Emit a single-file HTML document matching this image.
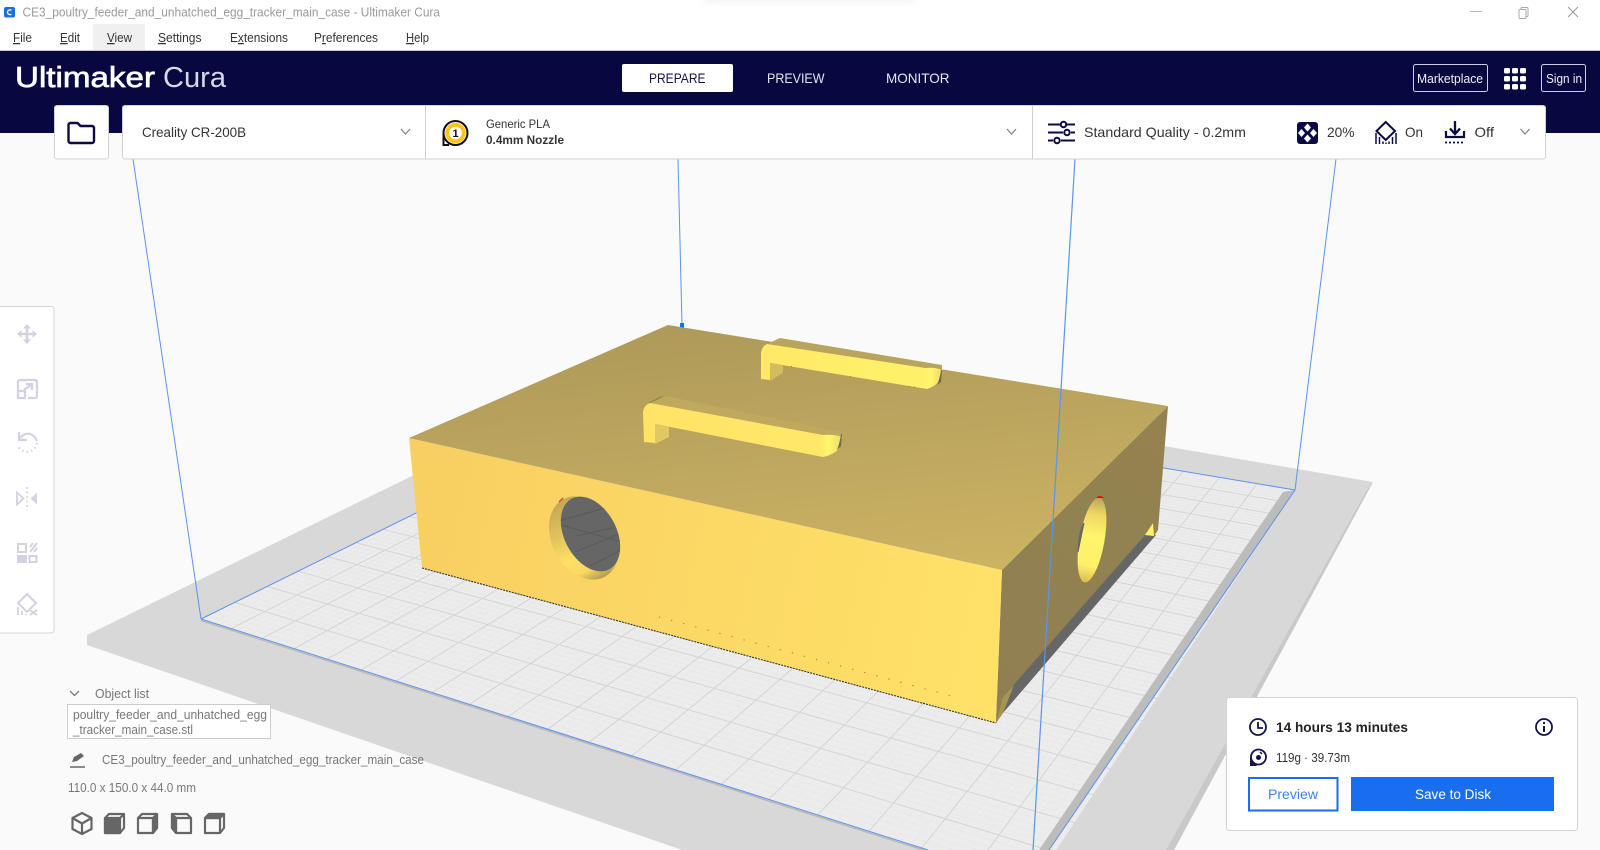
<!DOCTYPE html>
<html lang="en"><head><meta charset="utf-8"><title>Ultimaker Cura</title>
<style>
html,body{margin:0;padding:0;background:#fafafa;width:1600px;height:850px;overflow:hidden}
svg{display:block;position:absolute;left:0;top:0;filter:blur(.35px)}
text{font-family:"Liberation Sans",sans-serif;white-space:pre}
</style></head><body>
<svg xmlns="http://www.w3.org/2000/svg" width="1600" height="850" viewBox="0 0 1600 850">
<defs>
<linearGradient id="top" gradientUnits="userSpaceOnUse" x1="700" y1="325" x2="725" y2="590"><stop offset="0" stop-color="#ae9a5a"/><stop offset="1" stop-color="#ccb263"/></linearGradient>
<linearGradient id="front" gradientUnits="userSpaceOnUse" x1="409" y1="500" x2="1000" y2="620"><stop offset="0" stop-color="#f8cf62"/><stop offset="1" stop-color="#ffe168"/></linearGradient>
<linearGradient id="right" gradientUnits="userSpaceOnUse" x1="1160" y1="410" x2="1000" y2="700"><stop offset="0" stop-color="#948350"/><stop offset="1" stop-color="#8f7f52"/></linearGradient>
<linearGradient id="rim" gradientUnits="userSpaceOnUse" x1="0" y1="496" x2="0" y2="581"><stop offset="0" stop-color="#c4a858"/><stop offset=".35" stop-color="#e2c45e"/><stop offset=".65" stop-color="#ffe064"/><stop offset=".85" stop-color="#f8d862"/><stop offset="1" stop-color="#b89f52"/></linearGradient>
<linearGradient id="hole2" x1="0" y1="0" x2="0" y2="1"><stop offset="0" stop-color="#b8a45c"/><stop offset=".2" stop-color="#efd764"/><stop offset=".45" stop-color="#fff46c"/><stop offset=".8" stop-color="#fff06a"/><stop offset="1" stop-color="#d8bc54"/></linearGradient>
<linearGradient id="hend" x1="0" y1="0" x2="1" y2="0"><stop offset="0" stop-color="#ffe366"/><stop offset=".7" stop-color="#ffe768"/><stop offset=".89" stop-color="#ffe868"/><stop offset=".93" stop-color="#fff66e"/><stop offset="1" stop-color="#f0dc64"/></linearGradient>
<linearGradient id="hend2" x1="0" y1="0" x2="1" y2="0"><stop offset="0" stop-color="#ffe868"/><stop offset=".7" stop-color="#fff06a"/><stop offset=".89" stop-color="#fff06a"/><stop offset=".93" stop-color="#fff66e"/><stop offset="1" stop-color="#f0dc64"/></linearGradient>
<filter id="sh" x="-20%" y="-400%" width="140%" height="900%"><feGaussianBlur stdDeviation="4"/></filter>
<clipPath id="hc"><ellipse cx="590.500" cy="534" rx="26" ry="40" transform="rotate(-28 590.500 534)"/></clipPath>
</defs>

<!-- scene -->
<rect width="1600" height="850" fill="#fafafa"/>
<polygon points="87,635 87,645 682,850 1174,850 1373,482 653,358" fill="#d8d8d8"/>
<polygon points="1373,482 1174,850 1166,850 1367,490" fill="#c9c9c9"/>
<polygon points="201,619 674,386 1295,490 1034,883.500" fill="#ececec"/>
<g id="grid2" stroke="#e5e5e5" stroke-width=".5" fill="none"></g>
<g id="grid" stroke="#d4d4d4" stroke-width="1" fill="none"></g>
<polygon points="1295,490 1049,850 1039,850 1283,492" fill="#bcbcbc"/>
<path d="M201,620.500 L928,851.500" stroke="#b8b8b8" stroke-width="1.500" fill="none"/>
<g stroke="#5b93ee" stroke-width="1" fill="none">
<path d="M201,619 L674,386"/>
<path d="M674,386 L1295,490"/>
<path d="M201,619 L928,850"/>
<path d="M1295,490 L1049,850"/>
<path d="M133,159 L201,619"/>
<path d="M1336,159 L1295,490"/>
<path d="M678,159 L682,325"/>
</g>
<rect x="680" y="323" width="4" height="5" fill="#1a6fe8"/>

<!-- object -->
<polygon points="1145,533 1156,535 1003,713 996,723 996,700" fill="#666"/>
<polygon points="1002,570 1168,406 1158,530 1154,536 1145,535 1003,697 996,723" fill="url(#right)"/>
<polygon points="1003,697 1014,685 1003,713 996,723" fill="#a8944e"/>
<polygon points="1145,535 1153,523 1154,536" fill="#fff06a"/>
<polygon points="409,438 1002,570 996,723 422,568" fill="url(#front)"/>
<polygon points="668,325 1168,406 1002,570 409,438" fill="url(#top)"/>
<path d="M422,568 L996,723" stroke="#333" stroke-width="1.100" stroke-dasharray="2 1" fill="none"/>
<path d="M659,617 L959,698" stroke="#f0502c" stroke-width="1" stroke-dasharray="1.200 11.300" fill="none"/>
<!-- front hole -->
<ellipse cx="584" cy="538" rx="32" ry="44" transform="rotate(-28 584 538)" fill="url(#rim)"/>
<ellipse cx="590.500" cy="534" rx="26" ry="40" transform="rotate(-28 590.500 534)" fill="#666"/>
<g stroke="#595959" stroke-width="1" fill="none" clip-path="url(#hc)"><path d="M555,522 L612,506"/><path d="M558,524 L625,543"/><path d="M575,552 L622,533"/><path d="M576,536 L612,528"/><path d="M590,566 L625,548"/></g>
<path d="M559,502 L563,498" stroke="#e04030" stroke-width="1.300" fill="none"/>
<!-- right hole -->
<ellipse cx="1092" cy="540" rx="12.500" ry="43" transform="rotate(10 1092 540)" fill="url(#hole2)"/>
<path d="M1084,523 L1078,552 Q1079,530 1084,523Z" fill="#666" stroke="#666"/>
<path d="M1096,498 Q1100,494 1104,498 Z" fill="#f00"/>
<!-- handles -->
<polygon points="767,344 780,338 942,365 942,370 925,368" fill="#b8a45c"/>
<path d="M761,353 Q762,346 767,344 L925,368 Q936,367 942,370 L940,380 Q936,386 927,389 L770,363 L770,380 L761,379 Z" fill="url(#hend2)"/>
<polygon points="770,363 783,365 783,373 770,381" fill="#d4bb5e"/>
<path d="M942,370 L941,382 L937,385 Q940,378 941,370Z" fill="#6f6a50"/>
<polygon points="650,403 665,396 842,432 842,437 823,435" fill="#bfa95e"/>
<path d="M650,403 L665,396 L660,397 L648,403Z" fill="#8d7f52"/>
<path d="M643,412 Q644,405 650,403 L823,435 Q835,434 842,437 L840,447 Q836,454 823,457 L655,424 L655,443 L644,442 Z" fill="url(#hend)"/>
<polygon points="655,424 669,427 669,437 655,444" fill="#e2c860"/>
<path d="M842,434 L841,446 L837,450 Q840,442 841,434Z" fill="#6f6a50"/>
<g fill="#f0502c"><rect x="791" y="366" width="1" height="1"/><rect x="850" y="376" width="1" height="1"/><rect x="909" y="386" width="1" height="1"/><rect x="914" y="386.500" width="1" height="1"/></g>
<path d="M1075,159 L1033,850" stroke="#5b93ee" stroke-width="1.200" fill="none"/>

<!-- title bar -->
<rect width="1600" height="51" fill="#fff"/>
<rect x="705" y="-8" width="210" height="9" fill="#ccc" opacity=".3" filter="url(#sh)"/>
<rect x="4" y="7" width="11" height="10.500" rx="2" fill="#1a6fe0"/>
<path d="M11.500,10 Q7.500,9.500 7.500,12.200 Q7.500,15 11.500,14.500" stroke="#fff" stroke-width="1.300" fill="none"/>
<text x="22.500" y="16.500" font-size="12.500" fill="#9a9a9a" textLength="417.500" lengthAdjust="spacingAndGlyphs">CE3_poultry_feeder_and_unhatched_egg_tracker_main_case - Ultimaker Cura</text>
<path d="M1470,11.500 H1482" stroke="#bbb" stroke-width="1"/>
<rect x="1521" y="7.500" width="7" height="9" rx="1" fill="none" stroke="#aaa"/><rect x="1519" y="9.500" width="7" height="9" rx="1" fill="#fff" stroke="#aaa"/>
<path d="M1568,7 L1578,17 M1578,7 L1568,17" stroke="#999" stroke-width="1" fill="none"/>
<rect x="93" y="24" width="52" height="26" fill="#f0f0f0"/>
<g font-size="12.500" fill="#333">
<text x="13" y="42" textLength="19" lengthAdjust="spacingAndGlyphs"><tspan text-decoration="underline">F</tspan>ile</text>
<text x="60" y="42" textLength="20" lengthAdjust="spacingAndGlyphs"><tspan text-decoration="underline">E</tspan>dit</text>
<text x="107" y="42" textLength="25" lengthAdjust="spacingAndGlyphs"><tspan text-decoration="underline">V</tspan>iew</text>
<text x="158" y="42" textLength="43.500" lengthAdjust="spacingAndGlyphs"><tspan text-decoration="underline">S</tspan>ettings</text>
<text x="230" y="42" textLength="58" lengthAdjust="spacingAndGlyphs">E<tspan text-decoration="underline">x</tspan>tensions</text>
<text x="314" y="42" textLength="64" lengthAdjust="spacingAndGlyphs">P<tspan text-decoration="underline">r</tspan>eferences</text>
<text x="406" y="42" textLength="23" lengthAdjust="spacingAndGlyphs"><tspan text-decoration="underline">H</tspan>elp</text>
</g>
<rect y="50" width="1600" height="1" fill="#c8c8d0"/>

<!-- header -->
<rect y="51" width="1600" height="82" fill="#080840"/>
<text x="15" y="87" font-size="29" fill="#fff" stroke="#fff" stroke-width=".7" textLength="140" lengthAdjust="spacingAndGlyphs">Ultimaker</text>
<text x="163" y="87" font-size="29" fill="#d8d8e8" textLength="63" lengthAdjust="spacingAndGlyphs">Cura</text>
<rect x="622" y="64" width="111" height="28" rx="2" fill="#fff"/>
<text x="649" y="83" font-size="14" fill="#14144a" textLength="56.500" lengthAdjust="spacingAndGlyphs">PREPARE</text>
<text x="767" y="83" font-size="14" fill="#e6e6f0" textLength="57.500" lengthAdjust="spacingAndGlyphs">PREVIEW</text>
<text x="886" y="83" font-size="14" fill="#e6e6f0" textLength="63.500" lengthAdjust="spacingAndGlyphs">MONITOR</text>
<rect x="1413.500" y="64.500" width="74" height="27" rx="2" fill="none" stroke="#d0d0dc" stroke-width="1"/>
<text x="1417" y="83" font-size="12.500" fill="#f0f0f5" textLength="66" lengthAdjust="spacingAndGlyphs">Marketplace</text>
<rect x="1541.500" y="64.500" width="44" height="27" rx="2" fill="none" stroke="#d0d0dc" stroke-width="1"/>
<text x="1546" y="83" font-size="12.500" fill="#f0f0f5" textLength="36" lengthAdjust="spacingAndGlyphs">Sign in</text>
<g fill="#fff">
<rect x="1504" y="68" width="6" height="5.500" rx="1.500"/><rect x="1512" y="68" width="6" height="5.500" rx="1.500"/><rect x="1520" y="68" width="6" height="5.500" rx="1.500"/>
<rect x="1504" y="76" width="6" height="5.500" rx="1.500"/><rect x="1512" y="76" width="6" height="5.500" rx="1.500"/><rect x="1520" y="76" width="6" height="5.500" rx="1.500"/>
<rect x="1504" y="84" width="6" height="5.500" rx="1.500"/><rect x="1512" y="84" width="6" height="5.500" rx="1.500"/><rect x="1520" y="84" width="6" height="5.500" rx="1.500"/>
</g>

<!-- toolbar -->
<rect x="54.500" y="105.500" width="54" height="53.500" rx="2.500" fill="#fff" stroke="#d2d2d2"/>
<path d="M68.500,125 a2,2 0 0 1 2,-2 h7 l3,3 h11.500 a2,2 0 0 1 2,2 v13 a2,2 0 0 1 -2,2 h-21.500 a2,2 0 0 1 -2,-2 z" fill="none" stroke="#0a0a45" stroke-width="2.400" stroke-linejoin="round"/>
<path d="M122.500,108 a2.500,2.500 0 0 1 2.500,-2.500 H1543 a2.500,2.500 0 0 1 2.500,2.500 V156.500 a2.500,2.500 0 0 1 -2.500,2.500 H125 a2.500,2.500 0 0 1 -2.500,-2.500 Z" fill="#fff" stroke="#d2d2d2"/>
<path d="M425.500,105.500 V159 M1032.500,105.500 V159" stroke="#cfcfcf" stroke-width="1"/>
<text x="142" y="137" font-size="14" fill="#333" textLength="104" lengthAdjust="spacingAndGlyphs">Creality CR-200B</text>
<g stroke="#888" stroke-width="1.300" fill="none"><path d="M401,129 L405.500,134 L410,129"/><path d="M1007,129 L1011.500,134 L1016,129"/><path d="M1520.500,129 L1525,134 L1529.500,129"/></g>
<circle cx="455.500" cy="133" r="12" fill="#fff" stroke="#111" stroke-width="2"/>
<path d="M442.500,133 V146 H449 V144 H444.500 V133 Z" fill="#111"/>
<circle cx="455.500" cy="133" r="8.300" fill="#fff" stroke="#ffc21e" stroke-width="4"/>
<text x="455.500" y="137" font-size="11" font-weight="bold" text-anchor="middle" fill="#111">1</text>
<text x="486" y="128" font-size="12" fill="#333" textLength="64" lengthAdjust="spacingAndGlyphs">Generic PLA</text>
<text x="486" y="144" font-size="12" font-weight="bold" fill="#333" textLength="78" lengthAdjust="spacingAndGlyphs">0.4mm Nozzle</text>
<g stroke="#0a0a45" stroke-width="2" fill="none">
<path d="M1048,124.500 H1060 M1067,124.500 H1075"/><circle cx="1063.500" cy="124.500" r="2.700"/>
<path d="M1048,132.500 H1063 M1071,132.500 H1075"/><circle cx="1067" cy="132.500" r="2.700"/>
<path d="M1048,140.500 H1053 M1061,140.500 H1075"/><circle cx="1057" cy="140.500" r="2.700"/>
</g>
<text x="1084" y="137" font-size="14" fill="#333" textLength="162" lengthAdjust="spacingAndGlyphs">Standard Quality - 0.2mm</text>
<rect x="1297" y="122" width="21" height="22" rx="3" fill="#0a0a45"/>
<g fill="#fff"><polygon points="1307.500,123.500 1311,127.500 1307.500,131.500 1304,127.500"/><polygon points="1307.500,134.500 1311,138.500 1307.500,142.500 1304,138.500"/><polygon points="1301.500,129 1305,133 1301.500,137 1298,133"/><polygon points="1313.500,129 1317,133 1313.500,137 1310,133"/></g>
<text x="1327" y="137" font-size="14" fill="#333" textLength="27.500" lengthAdjust="spacingAndGlyphs">20%</text>
<path d="M1385.700,122 L1395,131 L1385.700,140 L1376.500,131 Z" fill="none" stroke="#0a0a45" stroke-width="2"/>
<path d="M1376,133 V144 M1379.500,137 V144 M1383,141.500 V144 M1386,142.500 V144 M1389,141.500 V144 M1392.500,137 V144 M1396,133 V144" stroke="#0a0a45" stroke-width="1.500" fill="none"/>
<text x="1405" y="137" font-size="14" fill="#333" textLength="18" lengthAdjust="spacingAndGlyphs">On</text>
<path d="M1455,121 V134 M1450,128.500 L1455,134 L1460,128.500" fill="none" stroke="#0a0a45" stroke-width="2.300"/>
<path d="M1446,131 V137 H1464 V131" fill="none" stroke="#0a0a45" stroke-width="2.200"/>
<path d="M1445,142.500 H1465" stroke="#0a0a45" stroke-width="1.800" stroke-dasharray="2 2" fill="none"/>
<text x="1474.500" y="137" font-size="14" fill="#333" textLength="19.500" lengthAdjust="spacingAndGlyphs">Off</text>

<!-- left toolbar -->
<path d="M-2,306.500 H51 a3,3 0 0 1 3,3 V630 a3,3 0 0 1 -3,3 H-2 Z" fill="#fff" stroke="#d4d4d4"/>
<g fill="#d2d2e2" stroke="none">
<path d="M27,324 L31,328.500 H28.300 V332.700 H32.500 V330 L37,334 L32.500,338 V335.300 H28.300 V339.500 H31 L27,344 L23,339.500 H25.700 V335.300 H21.500 V338 L17,334 L21.500,330 V332.700 H25.700 V328.500 H23 Z"/>
</g>
<g fill="none" stroke="#d2d2e2" stroke-width="2.200">
<path d="M18,391 V382 a2,2 0 0 1 2,-2 H35 a2,2 0 0 1 2,2 V396 a2,2 0 0 1 -2,2 H28"/>
<rect x="18" y="391" width="7" height="7"/>
<path d="M24,390 L32,384 M26,384 H32 V390"/>
<path d="M20,438 C25,432 33,432 37,441"/>
<path d="M19,432 V440 H27"/>
<path d="M37,443 A10,10 0 0 1 18,446" stroke-dasharray="1.500 3"/>
<path d="M17,492.500 L23.500,498.500 L17,504.500 Z" stroke-width="1.800"/>
<path d="M27,487 V510" stroke-dasharray="2 2.500" stroke-width="1.500"/>
<rect x="18" y="544" width="8" height="8" stroke-width="2"/>
<path d="M30,552 L37,543 M34,552 L37,548 M30,547 L33,543" stroke-width="2"/>
<rect x="29.500" y="556" width="7" height="6" stroke-width="2"/>
<path d="M27,594 L36,603 L27,612 L18,603 Z" stroke-width="2"/>
<path d="M18,607 V615 M22,611 V615 M26,614 V615 M30,610 L37,615 M37,610 L30,615" stroke-width="1.800"/>
</g>
<polygon points="30.500,498.500 37,492.500 37,504.500" fill="#d2d2e2"/>
<rect x="17" y="555" width="10" height="8" fill="#d2d2e2"/>

<!-- bottom-left -->
<path d="M70,691 L74.500,695.500 L79,691" fill="none" stroke="#777" stroke-width="1.300"/>
<text x="95" y="698" font-size="12.500" fill="#777" textLength="54" lengthAdjust="spacingAndGlyphs">Object list</text>
<rect x="67.500" y="704.500" width="203" height="34" fill="#fff" stroke="#ccc"/>
<text x="73" y="719" font-size="12.500" fill="#777" textLength="194" lengthAdjust="spacingAndGlyphs">poultry_feeder_and_unhatched_egg</text>
<text x="73" y="734" font-size="12.500" fill="#777" textLength="120" lengthAdjust="spacingAndGlyphs">_tracker_main_case.stl</text>
<path d="M72,762 L74,757 L81,753 L84,756 L77,761 Z" fill="#666"/><path d="M70,767 H85" stroke="#666" stroke-width="1.500"/>
<text x="102" y="764" font-size="12.500" fill="#777" textLength="322" lengthAdjust="spacingAndGlyphs">CE3_poultry_feeder_and_unhatched_egg_tracker_main_case</text>
<text x="68" y="792" font-size="12.500" fill="#777" textLength="128" lengthAdjust="spacingAndGlyphs">110.0 x 150.0 x 44.0 mm</text>
<g fill="none" stroke="#666" stroke-width="2.200" stroke-linejoin="round">
<path d="M82,813 L91.500,818 V829 L82,834 L72.500,829 V818 Z M72.500,818 L82,823.500 L91.500,818 M82,823.500 V834"/>
<path d="M105,818 L109,814 H124 V828 L120,833 H105 Z M120,818 L124,814"/>
<rect x="105" y="818" width="15" height="15" fill="#666"/>
<path d="M138,818 L142,814 H157 V828 L153,833 H138 Z M138,818 H153 V833"/>
<path d="M153,818 L157,814 V828 L153,833 Z" fill="#666"/>
<path d="M172,814 H187 L191,818 V833 H176 L172,828 Z M176,818 H191 M176,818 V833"/>
<path d="M172,814 L176,818 V833 L172,828 Z" fill="#666"/>
<path d="M205,818 L209,814 H224 V828 L220,833 H205 Z M205,818 H220 V833"/>
<path d="M205,818 L209,814 H224 L220,818 Z" fill="#666"/>
</g>

<!-- print panel -->
<rect x="1226.500" y="697.500" width="351" height="133" rx="3" fill="#fff" stroke="#d4d4d4"/>
<circle cx="1258" cy="727" r="8" fill="none" stroke="#14144a" stroke-width="1.800"/>
<path d="M1258,722 V728 H1263" fill="none" stroke="#14144a" stroke-width="1.800"/>
<text x="1276" y="732" font-size="14" font-weight="bold" fill="#222" textLength="132" lengthAdjust="spacingAndGlyphs">14 hours 13 minutes</text>
<circle cx="1544" cy="727" r="8" fill="none" stroke="#14144a" stroke-width="1.800"/>
<path d="M1544,726 V732 M1544,722 V724" stroke="#14144a" stroke-width="2" fill="none"/>
<circle cx="1258.500" cy="757" r="7.500" fill="none" stroke="#14144a" stroke-width="1.800"/>
<path d="M1250,757 V766 H1257 Z" fill="#14144a"/>
<circle cx="1258.500" cy="757.500" r="2.500" fill="#14144a"/>
<path d="M1260,752 L1262,754" stroke="#14144a" stroke-width="1.500"/>
<text x="1276" y="762" font-size="12.500" fill="#333" textLength="74" lengthAdjust="spacingAndGlyphs">119g · 39.73m</text>
<rect x="1249" y="778" width="88.500" height="32.500" fill="#fff" stroke="#196ef0" stroke-width="2"/>
<text x="1268" y="799" font-size="14" fill="#3b82f0" textLength="50" lengthAdjust="spacingAndGlyphs">Preview</text>
<rect x="1351" y="777" width="203" height="34" fill="#196ef0"/>
<text x="1415" y="799" font-size="14" fill="#fff" textLength="76" lengthAdjust="spacingAndGlyphs">Save to Disk</text>
</svg>
<script>
(function(){
var P=[[674,386],[1295,490],[1034,883.5],[201,619]];
var x0=P[0][0],y0=P[0][1],x1=P[1][0],y1=P[1][1],x2=P[2][0],y2=P[2][1],x3=P[3][0],y3=P[3][1];
var dx1=x1-x2,dx2=x3-x2,sx=x0-x1+x2-x3,dy1=y1-y2,dy2=y3-y2,sy=y0-y1+y2-y3;
var det=dx1*dy2-dx2*dy1,g=(sx*dy2-dx2*sy)/det,h=(dx1*sy-sx*dy1)/det;
var a=x1-x0+g*x1,b=x3-x0+h*x3,d=y1-y0+g*y1,e=y3-y0+h*y3;
function m(u,v){var w=g*u+h*v+1;return ((a*u+b*v+x0)/w).toFixed(1)+","+((d*u+e*v+y0)/w).toFixed(1);}
function build(n,id){var s="";for(var i=1;i<n;i++){var t=i/n;s+='<path d="M'+m(t,0)+' L'+m(t,1)+'"/><path d="M'+m(0,t)+' L'+m(1,t)+'"/>';}document.getElementById(id).innerHTML=s;}
build(100,"grid2");build(20,"grid");
})();
</script>
</body></html>
